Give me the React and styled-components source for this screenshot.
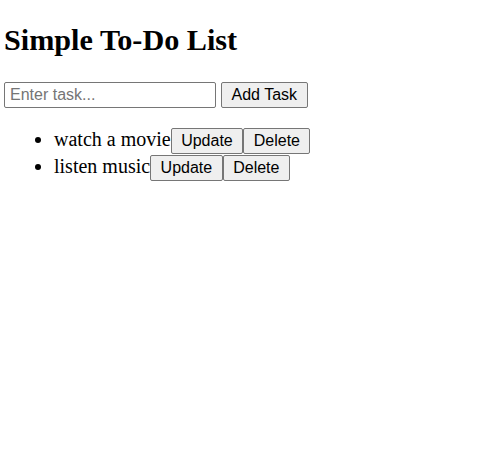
import React, { useState } from "react"
import styled, { createGlobalStyle } from "styled-components"

const GlobalStyle = createGlobalStyle`
  body {
    margin: 0;
    background: #fff;
    font-family: "Liberation Serif", "Times New Roman", serif;
    font-size: 16px;
    color: #000;
  }
`

const Page = styled.div`
  padding: 0 4px;
`

const Title = styled.h1`
  font-size: 30.2px;
  font-weight: bold;
  line-height: 34px;
  margin: 0;
  padding: 23px 0 0 0;
`

const Form = styled.div`
  display: flex;
  align-items: flex-start;
  gap: 5px;
  margin-top: 25px;
`

const TaskInput = styled.input`
  font-family: "Liberation Sans", Arial, sans-serif;
  font-size: 16px;
  line-height: 18px;
  width: 200px;
  padding: 3px 5px;
  border: 1px solid #767676;
  border-radius: 2px;
  margin: 0;
  color: #000;
  &::placeholder {
    color: #757575;
  }
`

const Button = styled.button`
  font-family: "Liberation Sans", Arial, sans-serif;
  font-size: 16px;
  line-height: 18px;
  height: 26px;
  padding: 3px 9.5px;
  margin: 0;
  background: #efefef;
  color: #000;
  border: 1px solid #767676;
  border-radius: 2px;
  vertical-align: baseline;
`

const List = styled.ul`
  margin: 19px 0 0 0;
  padding-left: 50px;
`

const Item = styled.li`
  font-size: 20px;
  line-height: 25px;
`

const App = () => {
  const [tasks] = useState(["watch a movie", "listen music"])
  return (
    <>
      <GlobalStyle />
      <Page>
        <Title>Simple To-Do List</Title>
        <Form>
          <TaskInput type="text" placeholder="Enter task..." />
          <Button>Add Task</Button>
        </Form>
        <List>
          {tasks.map((task) => (
            <Item key={task}>
              {task}
              <Button>Update</Button>
              <Button>Delete</Button>
            </Item>
          ))}
        </List>
      </Page>
    </>
  )
}

export default App
